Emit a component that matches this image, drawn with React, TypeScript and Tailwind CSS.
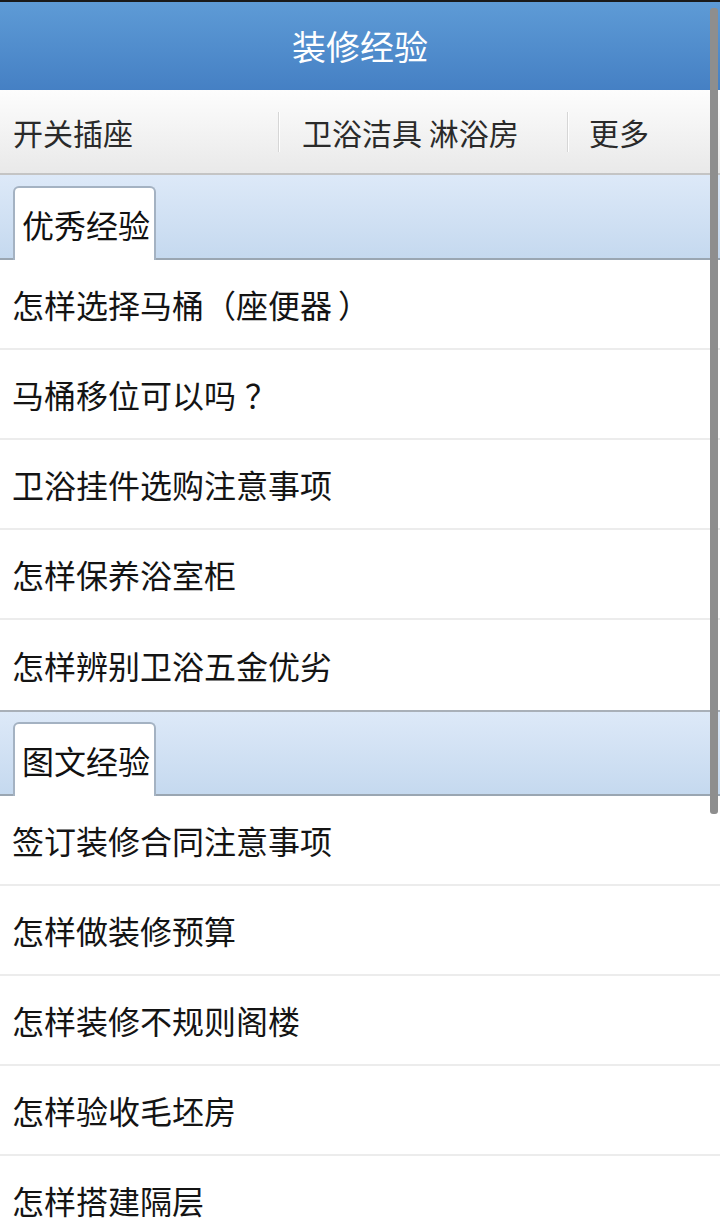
import React from "react";

const font = { fontFamily: '"Noto Sans CJK SC", "Noto Sans", sans-serif' };

function renderText(text: string) {
  const parts: React.ReactNode[] = [];
  let buf = "";
  let k = 0;
  for (const ch of text) {
    if (ch === "）" || ch === "？") {
      if (buf) parts.push(<span key={k++}>{buf}</span>);
      buf = "";
      const cls = ch === "）" ? "inline-block translate-x-[6px]" : "inline-block translate-x-[9px]";
      parts.push(
        <span key={k++} className={cls}>
          {ch}
        </span>
      );
    } else {
      buf += ch;
    }
  }
  if (buf) parts.push(<span key={k++}>{buf}</span>);
  return parts;
}

function Row({ text, last }: { text: string; last?: boolean }) {
  return (
    <div
      className={`h-[90px] flex items-center pl-[12px] bg-white text-[32px] text-[#141414] leading-none [text-spacing-trim:space-all] ${
        last ? "" : "border-b-2 border-[#ececec]"
      }`}
    >
      <div className="whitespace-pre">{renderText(text)}</div>
    </div>
  );
}

function SectionHeader({ title, top }: { title: string; top: boolean }) {
  return (
    <div
      className={`flex items-end pl-[13px] bg-gradient-to-b from-[#dde9f8] to-[#c5d9ef] border-b-2 border-[#9aa6b2] ${
        top ? "h-[86px] border-t-2 border-t-[#a9b0b8]" : "h-[85px]"
      }`}
    >
      <div className="w-[143px] h-[74px] -mb-[2px] bg-white border-2 border-b-0 border-[#a4b2c2] rounded-t-[6px] flex items-center pl-[7px] text-[32px] text-[#111] leading-none">
        {title}
      </div>
    </div>
  );
}

export default function App() {
  const list1 = [
    "怎样选择马桶（座便器）",
    "马桶移位可以吗？",
    "卫浴挂件选购注意事项",
    "怎样保养浴室柜",
    "怎样辨别卫浴五金优劣",
  ];
  const list2 = [
    "签订装修合同注意事项",
    "怎样做装修预算",
    "怎样装修不规则阁楼",
    "怎样验收毛坯房",
    "怎样搭建隔层",
  ];
  return (
    <div className="relative w-[720px] h-[1232px] overflow-hidden bg-white" style={font}>
      <div className="h-[2px] bg-[#1a1a1a]" />
      <div className="h-[88px] flex items-center justify-center bg-gradient-to-b from-[#5e9bd6] to-[#4580c4] text-white text-[34px] leading-none">
        装修经验
      </div>
      <div className="h-[85px] flex items-center bg-gradient-to-b from-[#fdfdfd] to-[#e9e9e9] border-b-2 border-[#c4c4c4] text-[30px] text-[#2a2a2a] leading-none">
        <div className="w-[278px] pl-[13px]">开关插座</div>
        <div className="w-[2px] h-[40px] bg-[#d6d6d6] border-r border-white" />
        <div className="w-[287px] pl-[22px]">卫浴洁具 淋浴房</div>
        <div className="w-[2px] h-[40px] bg-[#d6d6d6] border-r border-white" />
        <div className="pl-[20px]">更多</div>
      </div>
      <SectionHeader title="优秀经验" top={false} />
      {list1.map((t, i) => (
        <Row key={t} text={t} last={i === list1.length - 1} />
      ))}
      <SectionHeader title="图文经验" top={true} />
      {list2.map((t) => (
        <Row key={t} text={t} />
      ))}
      <div className="absolute right-[2px] top-[8px] w-[8px] h-[806px] rounded-[3px] bg-[#8e8e8e]" />
    </div>
  );
}
